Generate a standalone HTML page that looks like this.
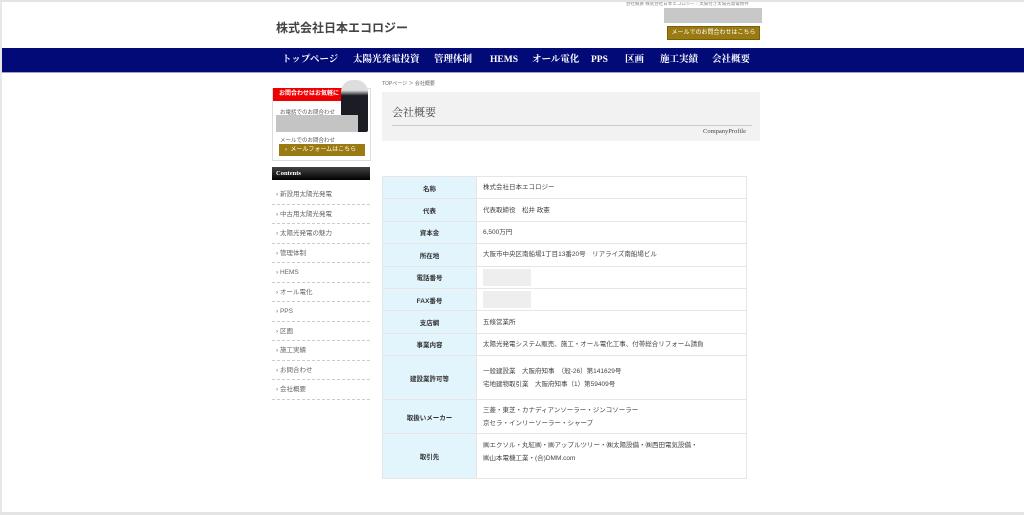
<!DOCTYPE html>
<html><head><meta charset="utf-8"><style>
*{margin:0;padding:0;box-sizing:border-box}
html,body{width:1024px;height:515px;overflow:hidden;background:#fff}
body{font-family:"Liberation Sans","Noto Sans CJK JP",sans-serif;color:#333;position:relative}
.frame{position:absolute;left:0;top:0;width:1024px;height:515px;border-top:2px solid #e4e4e4;border-left:2px solid #e8e8e8;border-bottom:3px solid #e4e4e4;pointer-events:none;z-index:5}
.abs{position:absolute}
.serif{font-family:"Liberation Serif","Noto Serif CJK SC",serif}
.nav{left:0;top:48px;width:1024px;height:25px;background:#020a78;border-bottom:1px solid #9aa0d0}
.nav span{position:absolute;top:0;height:25px;line-height:25px;color:#fff;font-size:9.5px;font-weight:bold;font-family:"Liberation Serif","Noto Serif CJK SC",serif;white-space:nowrap}
table{position:absolute;left:382px;top:176px;width:365px;border-collapse:collapse;font-size:6.5px}
td{border:1px solid #e6e6e6;height:22.4px}
td.l{background:#e2f4fc;width:94px;text-align:center;font-weight:bold;color:#333}
td.v{padding-left:6px;color:#444;line-height:13px}
.blur{display:inline-block;width:48px;height:17px;background:#eee;vertical-align:middle}
.side{position:absolute;left:0;top:0}
.side li{list-style:none;display:block;position:absolute;left:272px;width:98px;height:19.5px;line-height:19px;border-bottom:1px dashed #ccc;font-size:6.5px;color:#666;padding-left:4px;white-space:nowrap}
</style></head><body>
<div class="frame"></div>
<div class="abs" style="left:276px;top:19px;font-size:12px;font-weight:bold;color:#444">株式会社日本エコロジー</div>
<div class="abs" style="left:626px;top:1px;font-size:4.5px;color:#888">会社概要 株式会社日本エコロジー｜太陽付き太陽光発電物件</div>
<div class="abs" style="left:664px;top:8px;width:98px;height:15px;background:#c8c8c8"></div>
<div class="abs" style="left:667px;top:26px;width:93px;height:14px;background:#9a7a12;border:1px solid #7a5e08;color:#fff;font-size:6px;text-align:center;line-height:12px">メールでのお問合わせはこちら</div>
<div class="abs nav">
<span style="left:282px">トップページ</span><span style="left:353px">太陽光発電投資</span><span style="left:434px">管理体制</span><span style="left:490px">HEMS</span><span style="left:532px">オール電化</span><span style="left:591px">PPS</span><span style="left:625px">区画</span><span style="left:660px">施工実績</span><span style="left:712px">会社概要</span>
</div>
<div class="abs" style="left:272px;top:88px;width:99px;height:73px;border:1px solid #ddd"></div>
<div class="abs" style="left:273px;top:88px;width:80px;height:13px;background:#e00;color:#fff;font-size:6px;font-weight:bold;line-height:13px;padding-left:6px">お問合わせはお気軽に</div>
<div class="abs" style="left:341px;top:80px;width:27px;height:52px;background:linear-gradient(#ddd 0,#ddd 20%,#1c1c24 30%,#1c1c24 100%);border-radius:12px 12px 2px 2px"></div>
<div class="abs" style="left:280px;top:108px;font-size:5.5px;color:#555">お電話でのお問合わせ</div>
<div class="abs" style="left:276px;top:115px;width:82px;height:17px;background:#c4c4c4"></div>
<div class="abs" style="left:280px;top:136px;font-size:5.5px;color:#555">メールでのお問合わせ</div>
<div class="abs" style="left:279px;top:144px;width:86px;height:12px;background:#9a7a12;color:#fff;font-size:6px;line-height:12px;padding-left:6px">›&nbsp; メールフォームはこちら</div>
<div class="abs serif" style="left:272px;top:167px;width:98px;height:13px;background:linear-gradient(#444,#000);color:#fff;font-size:6.5px;font-weight:bold;line-height:13px;padding-left:4px">Contents</div>
<ul class="side">
<li style="top:185px">› 新設用太陽光発電</li><li style="top:204.5px">› 中古用太陽光発電</li><li style="top:224px">› 太陽光発電の魅力</li><li style="top:243.5px">› 管理体制</li><li style="top:263px">› HEMS</li><li style="top:282.5px">› オール電化</li><li style="top:302px">› PPS</li><li style="top:321.5px">› 区画</li><li style="top:341px">› 施工実績</li><li style="top:360.5px">› お問合わせ</li><li style="top:380px">› 会社概要</li>
</ul>
<div class="abs" style="left:382px;top:80px;font-size:5px;color:#666">TOPページ ＞ 会社概要</div>
<div class="abs" style="left:382px;top:92px;width:378px;height:49px;background:#f2f2f2"></div>
<div class="abs serif" style="left:392px;top:104px;font-size:11px;color:#444">会社概要</div>
<div class="abs" style="left:392px;top:125px;width:360px;height:1px;background:#ccc"></div>
<div class="abs serif" style="left:703px;top:128px;font-size:6.5px;color:#444">CompanyProfile</div>
<table>
<tr><td class="l">名称</td><td class="v">株式会社日本エコロジー</td></tr>
<tr><td class="l">代表</td><td class="v">代表取締役　松井 政憲</td></tr>
<tr><td class="l">資本金</td><td class="v">6,500万円</td></tr>
<tr><td class="l">所在地</td><td class="v">大阪市中央区南船場1丁目13番20号　リアライズ南船場ビル</td></tr>
<tr><td class="l">電話番号</td><td class="v"><span class="blur"></span></td></tr>
<tr><td class="l">FAX番号</td><td class="v"><span class="blur"></span></td></tr>
<tr><td class="l">支店網</td><td class="v">五條営業所</td></tr>
<tr><td class="l">事業内容</td><td class="v">太陽光発電システム販売、施工・オール電化工事、付帯総合リフォーム請負</td></tr>
<tr><td class="l" style="height:44px">建設業許可等</td><td class="v">一般建設業　大阪府知事　（般-26）第141629号<br>宅地建物取引業　大阪府知事（1）第59409号</td></tr>
<tr><td class="l" style="height:34px">取扱いメーカー</td><td class="v">三菱・東芝・カナディアンソーラー・ジンコソーラー<br>京セラ・インリーソーラー・シャープ</td></tr>
<tr><td class="l" style="height:45px">取引先</td><td class="v" style="vertical-align:top;padding-top:5px">㈱エクソル・丸紅㈱・㈱アップルツリー・㈱太陽設備・㈱西田電気設備・<br>㈱山本電機工業・(合)DMM.com</td></tr>
</table>
</body></html>
